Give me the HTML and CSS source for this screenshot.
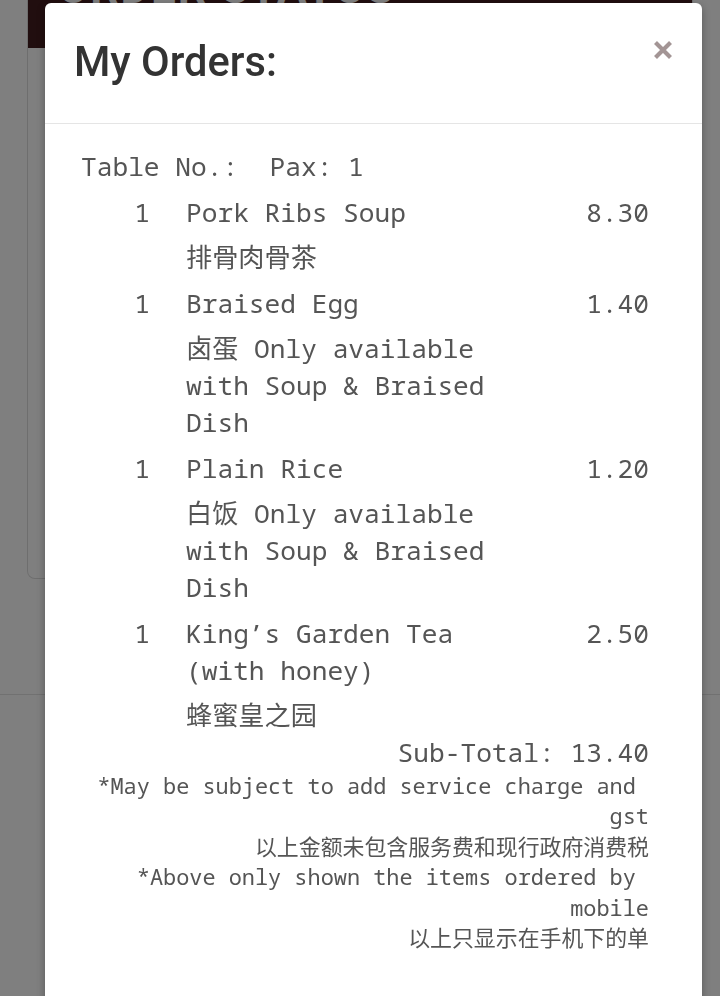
FILE: index.html
```html
<!DOCTYPE html>
<html lang="en">
  <head>
    <meta charset="UTF-8" />
    <meta name="viewport" content="width=device-width, initial-scale=1.0" />
    <title>My Orders</title>
    <link rel="stylesheet" href="styles.css">
  </head>
  <body>
    <div class="page">
      <div class="status-card">
        <div class="status-head"><h2>ORDER STATUS</h2></div>
        <div class="status-body"></div>
      </div>
      <div class="page-rule"></div>
    </div>

    <div class="backdrop"></div>

    <div class="modal">
      <div class="modal-header">
        <h1>My Orders:</h1>
        <button class="close" title="Close">
          <svg width="20" height="20" viewBox="0 0 20 20">
            <path d="M2.5 2.5L17.5 17.5M17.5 2.5L2.5 17.5" stroke="currentColor" stroke-width="4.2" />
          </svg>
        </button>
      </div>
      <div class="modal-body">
        <div class="receipt">
          <div class="table-line">Table No.:  Pax: 1</div>

          <div class="item">
            <span class="qty">1</span>
            <span class="name">Pork Ribs Soup</span>
            <span class="price">8.30</span>
            <div class="note">排骨肉骨茶</div>
          </div>
          <div class="item">
            <span class="qty">1</span>
            <span class="name">Braised Egg</span>
            <span class="price">1.40</span>
            <div class="note">卤蛋 Only available with Soup &amp; Braised Dish</div>
          </div>
          <div class="item">
            <span class="qty">1</span>
            <span class="name">Plain Rice</span>
            <span class="price">1.20</span>
            <div class="note">白饭 Only available with Soup &amp; Braised Dish</div>
          </div>
          <div class="item">
            <span class="qty">1</span>
            <span class="name">King’s Garden Tea (with honey)</span>
            <span class="price">2.50</span>
            <div class="note">蜂蜜皇之园</div>
          </div>

          <div class="subtotal">Sub-Total: 13.40</div>
          <div class="footnote">
            <p>*May be subject to add service charge and gst</p>
            <p>以上金额未包含服务费和现行政府消费税</p>
            <p>*Above only shown the items ordered by mobile</p>
            <p>以上只显示在手机下的单</p>
          </div>
        </div>
      </div>
    </div>
  </body>
</html>
```

FILE: styles.css
```css
html,
body {
  height: 100%;
}
body {
  margin: 0;
  background: #fff;
  font-family: Roboto, "Noto Sans", sans-serif;
  overflow: hidden;
}

/* page behind the dialog */
.page {
  padding: 0 27px;
}
.status-card {
  border: 1px solid #ddd;
  border-top: none;
  border-radius: 0 0 8px 8px;
  overflow: hidden;
}
.status-head {
  background: #431c1e;
  height: 48px;
  overflow: hidden;
}
.status-head h2 {
  margin: -34px 0 0 30px;
  color: #fff;
  font-size: 44px;
  line-height: 44px;
  letter-spacing: 2px;
}
.status-body {
  height: 530px;
}
.page-rule {
  margin: 115px -27px 0;
  border-top: 1px solid #e2e2e2;
}

.backdrop {
  position: fixed;
  inset: 0;
  background: rgba(0, 0, 0, 0.5);
}

/* dialog */
.modal {
  position: absolute;
  top: 3px;
  left: 45px;
  width: 657px;
  background: #fff;
  border-radius: 6px;
  box-shadow: 0 3px 9px rgba(0, 0, 0, 0.3);
  padding-bottom: 60px;
}
.modal-header {
  height: 120px;
  padding: 0 30px;
  border-bottom: 1px solid #e5e5e5;
  display: flex;
  align-items: center;
  justify-content: space-between;
}
.modal-header h1 {
  margin: 0 0 0 -1px;
  font-family: Roboto, sans-serif;
  font-weight: 500;
  font-size: 41.6px;
  color: #333;
  position: relative;
  top: -2px;
}
.close {
  border: none;
  background: none;
  padding: 0;
  color: #a39595;
  display: flex;
  margin-top: -26px;
  margin-right: -1px;
}

.modal-body {
  padding: 24px 53px 0 36px;
}
.receipt {
  font-family: "Noto Sans Mono", "DejaVu Sans Mono", "Noto Sans CJK SC", monospace;
  color: #555;
  font-size: 26.2px;
  line-height: 37px;
}
.table-line {
  white-space: pre;
}
.item {
  display: grid;
  grid-template-columns: 69px 330px 1fr;
  column-gap: 36px;
  margin-top: 8.5px;
}
.qty {
  text-align: right;
}
.price {
  text-align: right;
}
.note {
  grid-column: 2;
  margin-top: 8.5px;
}
.subtotal {
  text-align: right;
}
.footnote {
  font-size: 21.9px;
  line-height: 30.4px;
  text-align: right;
}
.footnote p {
  margin: 0;
  white-space: break-spaces;
}
```
